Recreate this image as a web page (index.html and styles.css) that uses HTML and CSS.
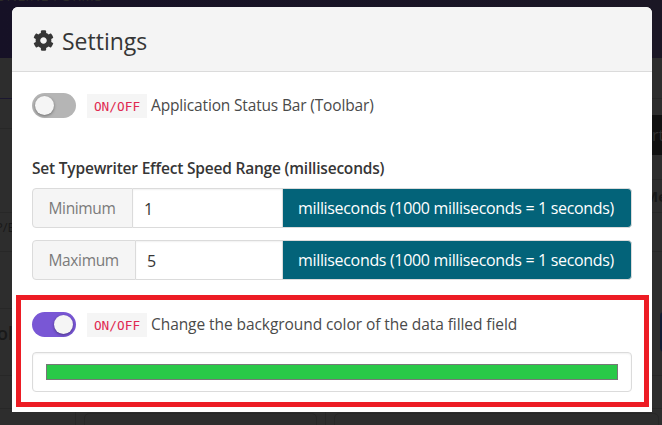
FILE: index.html
```html
<!DOCTYPE html>
<html lang="en">
<head>
<meta charset="utf-8">
<title>Settings</title>
<link rel="stylesheet" href="styles.css">
</head>
<body>
<div class="backdrop">
  <div class="band"><span>ONLINE FORMS</span></div>
  <div class="gutters">
    <div class="gutter left">
      <div class="row h41 accent"></div>
      <div class="row h30"></div>
      <div class="row h84"></div>
      <div class="row h39"><span class="path">P/E</span></div>
      <div class="row h57"></div>
      <div class="row h67"><span class="title">ol</span></div>
      <div class="row h33"></div>
    </div>
    <div class="gutter right">
      <div class="row h41"></div>
      <div class="row h81"><span class="dark-button">rt</span></div>
      <div class="row h33"><span class="strong">Me</span></div>
      <div class="row h39"></div>
      <div class="row h124"><span class="blue-button"></span></div>
      <div class="row h33"></div>
    </div>
  </div>
  <div class="panels"><i class="divider first"></i><i class="panel"></i><i class="divider"></i><i class="panel wide"></i></div>
</div>

<div class="modal">
  <header class="modal-head">
    <svg class="gear" viewBox="0 0 512 512"><path d="M487.400 315.700l-42.600-24.600c4.300-23.200 4.300-47 0-70.200l42.600-24.600c4.900-2.800 7.100-8.600 5.500-14-11.100-35.600-30-67.800-54.700-94.600-3.800-4.100-10-5.100-14.800-2.300L380.800 110c-17.900-15.400-38.500-27.300-60.800-35.100V25.800c0-5.600-3.900-10.500-9.400-11.700-36.700-8.200-74.300-7.800-109.200 0-5.500 1.200-9.400 6.100-9.400 11.700V75c-22.200 7.900-42.800 19.800-60.800 35.100L88.700 85.500c-4.900-2.800-11-1.900-14.800 2.300-24.700 26.700-43.600 58.900-54.700 94.600-1.700 5.400.6 11.200 5.500 14L67.300 221c-4.300 23.200-4.300 47 0 70.200l-42.600 24.600c-4.900 2.800-7.100 8.600-5.500 14 11.100 35.600 30 67.800 54.700 94.600 3.800 4.100 10 5.100 14.800 2.300l42.600-24.600c17.900 15.400 38.500 27.300 60.800 35.100v49.200c0 5.600 3.900 10.500 9.400 11.700 36.700 8.200 74.300 7.800 109.200 0 5.500-1.200 9.400-6.100 9.400-11.700v-49.200c22.200-7.900 42.800-19.800 60.800-35.100l42.600 24.600c4.900 2.800 11 1.900 14.800-2.300 24.700-26.700 43.600-58.900 54.700-94.600 1.500-5.500-.7-11.300-5.600-14.100zM256 336c-44.100 0-80-35.900-80-80s35.900-80 80-80 80 35.900 80 80-35.900 80-80 80z"/></svg>
    <h1>Settings</h1>
  </header>
  <main class="modal-body">
    <div class="option">
      <span class="switch"></span><code>ON/OFF</code><span class="label status">Application Status Bar (Toolbar)</span>
    </div>
    <h2><span>Set Typewriter Effect Speed Range (milliseconds)</span></h2>
    <div class="field">
      <span class="addon min">Minimum</span><span class="value">1</span><span class="unit"><span>milliseconds (1000 milliseconds = 1 seconds)</span></span>
    </div>
    <div class="field">
      <span class="addon max">Maximum</span><span class="value">5</span><span class="unit"><span>milliseconds (1000 milliseconds = 1 seconds)</span></span>
    </div>
    <section class="highlight">
      <div class="option">
        <span class="switch on"></span><code>ON/OFF</code><span class="label change">Change the background color of the data filled field</span>
      </div>
      <div class="color-input"><span class="swatch"></span></div>
    </section>
  </main>
</div>
</body>
</html>
```
FILE: styles.css
```css
* { box-sizing: border-box; }
body {
  margin: 0;
  width: 662px;
  height: 425px;
  overflow: hidden;
  position: relative;
  background: #2d2d2d;
  font-family: "Open Sans", "Noto Sans", sans-serif;
  font-size: 16px;
  color: #4a4a4a;
  white-space: nowrap;
}
h1, h2 { margin: 0; }

/* Dimmed page behind the dialog */
.backdrop { position: absolute; inset: 0; overflow: hidden; color: #191919; }
.band {
  height: 58px;
  background: linear-gradient(90deg, #161126, #1b1725);
  color: #2b2b29;
  font-size: 14px;
  line-height: 14px;
  letter-spacing: .5px;
  overflow: hidden;
}
.band span { display: block; margin: -11px 0 0 -5px; }
.gutters { display: flex; justify-content: space-between; }
.gutter { overflow: hidden; }
.left { width: 12px; }
.right { width: 10px; }
.row { border-bottom: 1px solid #272727; overflow: hidden; }
.row.accent { border-color: #1b1730; }
.h30 { height: 30px; }
.h33 { height: 33px; }
.h39 { height: 39px; }
.h41 { height: 41px; }
.h57 { height: 57px; }
.h67 { height: 67px; }
.h81 { height: 81px; padding-top: 16px; }
.h84 { height: 84px; }
.h124 { height: 124px; padding-top: 60px; }
.path { display: block; margin-left: -5px; font-size: 13px; line-height: 29px; }
.title { display: block; margin: 12px 0 0 -3px; font-size: 18px; font-weight: 600; line-height: 24px; }
.strong { display: block; margin-left: -8px; font-size: 15px; font-weight: 700; line-height: 33px; }
.dark-button { display: block; height: 40px; background: #111; color: #303030; line-height: 40px; }
.blue-button { display: block; width: 20px; height: 40px; margin-left: 8px; border-radius: 4px; background: #111d33; }
.panels { display: flex; height: 20px; }
.panels > * { flex: none; }
.divider { width: 1px; margin-right: 8px; background: #272727; }
.first { margin-left: 75px; }
.panel { width: 233px; height: 30px; margin: 4px 8px 0 0; border: 1px solid #272727; border-radius: 5px; }
.wide { width: 325px; }

/* Dialog */
.modal {
  position: absolute;
  left: 12px;
  top: 7px;
  width: 640px;
  height: 405px;
  border-radius: 6px 6px 0 0;
  overflow: hidden;
  background: #fff;
}
.modal-head {
  display: flex;
  align-items: center;
  height: 65px;
  padding-left: 21px;
  border-bottom: 1px solid #dbdbdb;
  background: #f4f4f4;
  color: #363636;
}
.gear { width: 21px; height: 21px; margin-top: 2px; fill: #363636; }
h1 { margin: 4px 0 0 8px; font-size: 23px; font-weight: 400; line-height: 30px; }
.modal-body { padding: 20px 4px; }
.option { display: flex; align-items: center; height: 26px; padding-left: 16px; }
.switch {
  display: flex;
  align-items: center;
  width: 44px;
  height: 25px;
  padding: 0 3px;
  border-radius: 13px;
  background: #b5b5b5;
}
.switch::before {
  content: "";
  width: 19px;
  height: 19px;
  border-radius: 50%;
  background: #f5f5f5;
  box-shadow: 0 1px 3px rgba(0, 0, 0, .4);
}
.on { justify-content: flex-end; background: #7957d5; }
code {
  width: 60px;
  height: 24px;
  margin: 1px 4px 0 11px;
  background: #f5f5f5;
  color: #e02850;
  font: 12.8px/25px "DejaVu Sans Mono", monospace;
  text-align: center;
}
.label { line-height: 26px; font-size: 15.500px; }
.status { letter-spacing: -.16px; }
.change { letter-spacing: -.07px; }
h2 {
  height: 24px;
  margin: 38px 16px 8px;
  color: #363636;
  font-size: 15.500px;
  font-weight: 600;
  line-height: 24px;
  letter-spacing: -.2px;
}
.field { display: flex; height: 40px; margin: 0 16px 12px; line-height: 40px; }
.addon {
  flex: none;
  padding-left: 15.500px;
  border: 1px solid #dbdbdb;
  border-radius: 4px 0 0 4px;
  background: #f5f5f5;
  color: #7a7a7a;
  font-size: 15.500px;
  line-height: 39px;
  letter-spacing: -.35px;
}
.min { width: 101px; }
.max { width: 104px; }
.value {
  flex: 1;
  padding-left: 11px;
  border: solid #dbdbdb;
  border-width: 1px 0;
  box-shadow: inset 0 1px 2px rgba(10, 10, 10, .06);
  color: #363636;
}
.unit {
  flex: none;
  width: 350px;
  padding-left: 15px;
  border: 1px solid #dbdbdb;
  border-radius: 0 4px 4px 0;
  background: #036379;
  color: #fff;
  line-height: 39px;
  letter-spacing: -.33px;
}
.highlight { width: 633px; height: 112px; margin-top: 15px; padding-top: 11px; border: 5px solid #ed1c24; }
.highlight .option { padding-left: 11px; }
.color-input {
  width: 600px;
  height: 40px;
  margin: 15px 0 0 11px;
  padding: 11px 13px;
  border: 1px solid #dbdbdb;
  border-radius: 4px;
  box-shadow: inset 0 1px 2px rgba(10, 10, 10, .06);
}
.swatch { display: block; height: 16px; border: 1px solid #777; background: #29c948; }
```
